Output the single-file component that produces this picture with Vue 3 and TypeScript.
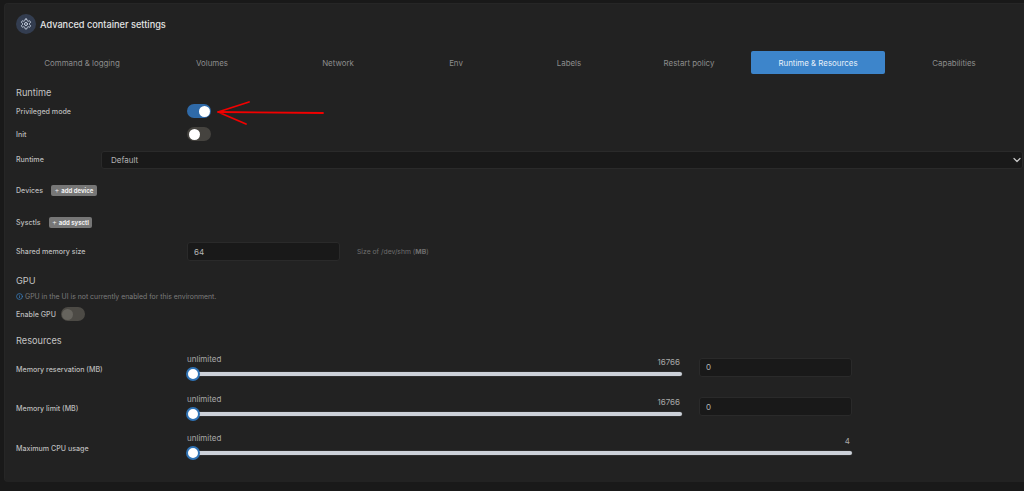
<script setup lang="ts">
const tabs = [
  { name: 'Command & logging', width: 134 },
  { name: 'Volumes', width: 126 },
  { name: 'Network', width: 126 },
  { name: 'Env', width: 110 },
  { name: 'Labels', width: 116 },
  { name: 'Restart policy', width: 124 },
  { name: 'Runtime & Resources', width: 134, active: true },
  { name: 'Capabilities', width: 138 }
]

const sliders = [
  { label: 'Memory reservation (MB)', max: '16766', input: '0' },
  { label: 'Memory limit (MB)', max: '16766', input: '0' },
  { label: 'Maximum CPU usage', max: '4' }
]
</script>

<template>
  <div class="page">
    <section class="widget">
      <header class="title">
        <span class="title-icon">
          <svg width="12" height="12" viewBox="0 0 24 24" fill="none" stroke="#c9d3e2" stroke-width="2" stroke-linecap="round" stroke-linejoin="round">
            <path d="M12.22 2h-.44a2 2 0 0 0-2 2v.18a2 2 0 0 1-1 1.73l-.43.25a2 2 0 0 1-2 0l-.15-.08a2 2 0 0 0-2.73.73l-.22.38a2 2 0 0 0 .73 2.73l.15.1a2 2 0 0 1 1 1.72v.51a2 2 0 0 1-1 1.74l-.15.09a2 2 0 0 0-.73 2.73l.22.38a2 2 0 0 0 2.73.73l.15-.08a2 2 0 0 1 2 0l.43.25a2 2 0 0 1 1 1.73V20a2 2 0 0 0 2 2h.44a2 2 0 0 0 2-2v-.18a2 2 0 0 1 1-1.73l.43-.25a2 2 0 0 1 2 0l.15.08a2 2 0 0 0 2.73-.73l.22-.39a2 2 0 0 0-.73-2.73l-.15-.08a2 2 0 0 1-1-1.74v-.5a2 2 0 0 1 1-1.74l.15-.09a2 2 0 0 0 .73-2.73l-.22-.38a2 2 0 0 0-2.73-.73l-.15.08a2 2 0 0 1-2 0l-.43-.25a2 2 0 0 1-1-1.73V4a2 2 0 0 0-2-2z" />
            <circle cx="12" cy="12" r="3" />
          </svg>
        </span>
        Advanced container settings
      </header>

      <nav class="tabs">
        <div
          v-for="tab in tabs"
          :key="tab.name"
          class="tab"
          :class="{ active: tab.active }"
          :style="{ width: tab.width + 'px' }"
        >
          {{ tab.name }}
        </div>
      </nav>

      <h3 class="heading first">Runtime</h3>
      <div class="row toggle-row">
        <label class="label">Privileged mode</label>
        <span class="toggle on"><i></i></span>
      </div>
      <div class="row toggle-row init">
        <label class="label">Init</label>
        <span class="toggle"><i></i></span>
      </div>
      <div class="row runtime">
        <label class="label short">Runtime</label>
        <div class="select">
          Default
          <svg width="8" height="8" viewBox="0 0 16 16" fill="none" stroke="#c8c8c8" stroke-width="2.4" stroke-linecap="round" stroke-linejoin="round">
            <path d="M2 5l6 6 6-6" />
          </svg>
        </div>
      </div>
      <div class="row devices">
        <label class="label">Devices</label>
        <button class="add"><span>+</span> <b>add device</b></button>
      </div>
      <div class="row sysctls">
        <label class="label">Sysctls</label>
        <button class="add"><span>+</span> <b>add sysctl</b></button>
      </div>
      <div class="row shared">
        <label class="label">Shared memory size</label>
        <input class="field" value="64" />
        <span class="hint">Size of /dev/shm (<b>MB</b>)</span>
      </div>

      <h3 class="heading gpu">GPU</h3>
      <p class="info">
        <svg width="7" height="7" viewBox="0 0 24 24" fill="none" stroke="#3b82c4" stroke-width="2.5" stroke-linecap="round">
          <circle cx="12" cy="12" r="10" />
          <path d="M12 16v-4M12 8h.01" />
        </svg>
        GPU in the UI is not currently enabled for this environment.
      </p>
      <div class="row enable-gpu">
        <label class="label">Enable GPU</label>
        <span class="toggle disabled"><i></i></span>
      </div>

      <h3 class="heading resources">Resources</h3>
      <div v-for="slider in sliders" :key="slider.label" class="row slider-row">
        <label class="label">{{ slider.label }}</label>
        <div class="slider" :class="{ wide: !slider.input }">
          <div class="slider-labels">
            <span>unlimited</span>
            <span class="slider-max">{{ slider.max }}</span>
          </div>
          <div class="track"><i class="handle"></i></div>
        </div>
        <input v-if="slider.input" class="field slider-input" :value="slider.input" />
      </div>
    </section>

    <svg class="arrow" width="112" height="28" viewBox="0 0 112 28" fill="none" stroke="#f20000" stroke-width="1.8" stroke-linecap="round" stroke-linejoin="round">
      <path d="M109 13 L4 12 M35 2 L4 12 L32 24" />
    </svg>
  </div>
</template>

<style scoped>
.page {
  position: relative;
  width: 1024px;
  height: 491px;
  padding-top: 3px;
  box-sizing: border-box;
  overflow: hidden;
  background: #191919;
  color: #c8c8c8;
  font-family: Inter, 'Liberation Sans', sans-serif;
}

.widget {
  box-sizing: border-box;
  width: 1030px;
  height: 479px;
  margin-left: 4px;
  padding: 0 11px;
  background: #222222;
  border-radius: 4px;
  border: 1px solid #262626;
  border-width: 1px 0 0 1px;
}

.title {
  display: flex;
  align-items: center;
  gap: 4px;
  height: 20px;
  margin-top: 10px;
  color: #e4e4e4;
  font-size: 9.2px;
  font-weight: 500;
}

.title-icon {
  display: flex;
  align-items: center;
  justify-content: center;
  width: 20px;
  height: 20px;
  border-radius: 50%;
  background: #333d50;
}

.tabs {
  display: flex;
  margin: 17px 0 0 -1px;
}

.tab {
  display: flex;
  flex: none;
  align-items: center;
  justify-content: center;
  height: 23px;
  color: #8d8d8d;
  font-size: 7.9px;
  border-radius: 2px;
}

.tab.active {
  background: #3d85cb;
  color: #e8f1fa;
}

.heading {
  height: 16px;
  margin: 0;
  color: #c4c4c4;
  font-size: 9.2px;
  font-weight: 400;
  line-height: 17px;
}

.heading.first {
  margin-top: 10px;
}

.heading.gpu {
  margin-top: 11px;
}

.heading.resources {
  margin-top: 11px;
}

.row {
  display: flex;
  align-items: center;
}

.label {
  flex: none;
  color: #bcbcbc;
  font-size: 7.1px;
  font-weight: 500;
}

.toggle-row {
  height: 22px;
}

.toggle-row .label,
.shared .label,
.slider-row .label {
  width: 171px;
}

.init {
  margin-top: 1px;
}

.toggle {
  display: flex;
  align-items: center;
  box-sizing: border-box;
  width: 24px;
  height: 14px;
  padding: 0 1.5px;
  border-radius: 7px;
  background: #45433f;
}

.toggle i {
  width: 11px;
  height: 11px;
  border-radius: 50%;
  background: #ffffff;
}

.toggle.on {
  justify-content: flex-end;
  background: #2f6aa8;
}

.toggle.disabled {
  background: #4c4a45;
}

.toggle.disabled i {
  background: #66645e;
}

.runtime {
  height: 18px;
  margin-top: 6px;
}

.short {
  width: 85px;
  margin-bottom: 2px;
}

.select {
  display: flex;
  flex: none;
  align-items: center;
  justify-content: space-between;
  box-sizing: border-box;
  width: 922px;
  height: 18px;
  padding: 0 1px 0 9px;
  background: #191919;
  border: 1px solid #2a2a2a;
  border-radius: 3px;
  color: #b4b4b4;
  font-size: 8px;
}

.devices {
  height: 19px;
  margin-top: 12px;
  gap: 8px;
}

.sysctls {
  height: 19px;
  margin-top: 13px;
  gap: 8px;
}

.add {
  height: 11px;
  padding: 0 3.5px;
  background: #777777;
  border: 0;
  border-radius: 2px;
  color: #f0f0f0;
  font-family: inherit;
  font-size: 6px;
  line-height: 11px;
}

.add span {
  font-size: 7.5px;
  font-weight: 300;
}

.shared {
  height: 19px;
  margin-top: 10px;
}

.field {
  flex: none;
  box-sizing: border-box;
  width: 153px;
  height: 19px;
  padding: 0 6px;
  background: #191919;
  border: 1px solid #2a2a2a;
  border-radius: 3px;
  color: #b4b4b4;
  font-family: inherit;
  font-size: 8px;
  outline: none;
}

.hint {
  margin-left: 17px;
  color: #6f6f6f;
  font-size: 6.8px;
}

.info {
  display: flex;
  align-items: center;
  gap: 2px;
  height: 14px;
  margin: 1px 0 0;
  color: #7c7c7c;
  font-size: 6.9px;
}

.enable-gpu {
  height: 14px;
  margin-top: 4px;
  gap: 5px;
}

.slider-row {
  height: 30px;
  margin-top: 9.5px;
}

.heading.resources + .slider-row {
  margin-top: 6px;
}

.slider {
  flex: none;
  width: 495px;
  align-self: flex-start;
}

.slider.wide {
  width: 665px;
}

.slider-labels {
  display: flex;
  justify-content: space-between;
  height: 14px;
  color: #a8a8a8;
  font-size: 8px;
  line-height: 11px;
}

.slider-max {
  align-self: flex-end;
  padding-right: 2px;
  font-size: 8px;
}

.track {
  position: relative;
  height: 4px;
  margin-top: 4px;
  border-radius: 2px;
  background: #ccd1d9;
  box-shadow: 0 0 0 0.5px #3a3a3a;
}

.handle {
  position: absolute;
  top: -5px;
  left: -1px;
  box-sizing: border-box;
  width: 14px;
  height: 14px;
  border: 2px solid #2f72b4;
  border-radius: 50%;
  background: #ffffff;
}

.slider-input {
  align-self: flex-start;
  margin: 3.5px 0 0 17px;
}

.arrow {
  position: absolute;
  top: 100px;
  left: 214px;
}
</style>
